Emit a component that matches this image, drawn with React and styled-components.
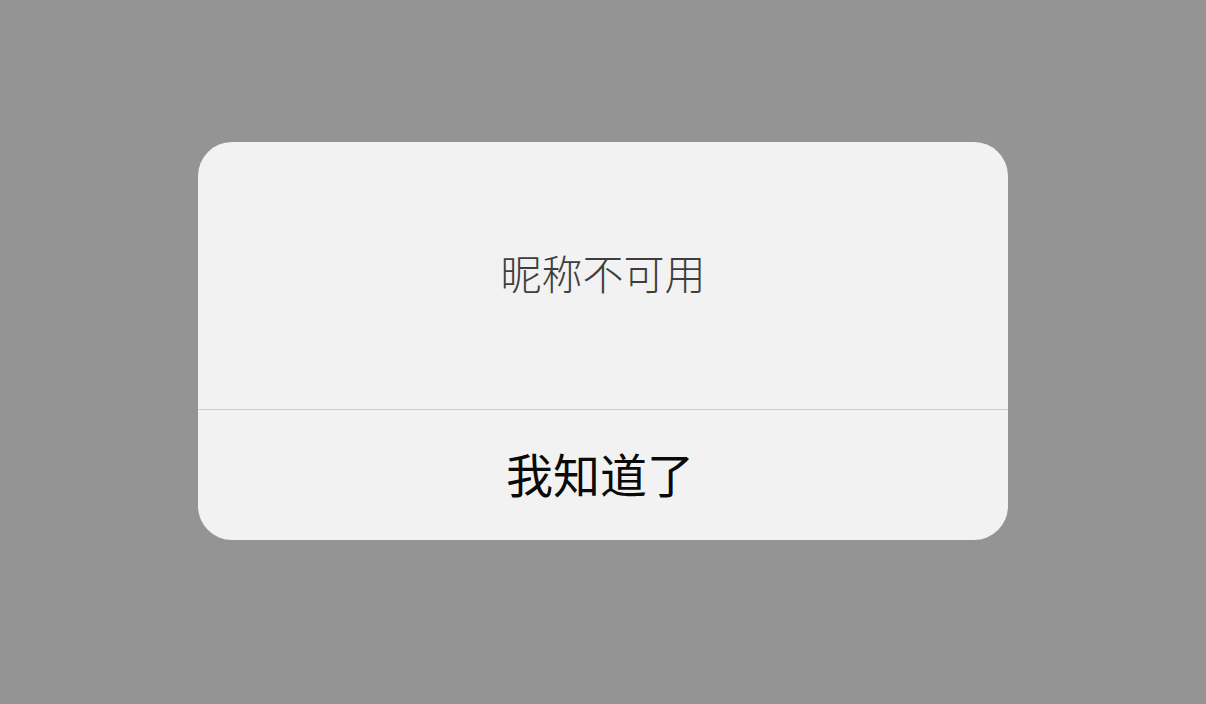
import React from "react";
import styled, { createGlobalStyle } from "styled-components";

const Global = createGlobalStyle`
  html, body { margin: 0; padding: 0; }
  body {
    background: #949494;
    font-family: "Noto Sans CJK SC", "Noto Sans", sans-serif;
  }
`;

const Page = styled.div`
  width: 1206px;
  height: 704px;
  display: flex;
  justify-content: center;
  padding-top: 142px;
  box-sizing: border-box;
`;

const Dialog = styled.div`
  width: 810px;
  height: 398px;
  background: #f2f2f2;
  border-radius: 34px;
  overflow: hidden;
  display: flex;
  flex-direction: column;
`;

const Body = styled.div`
  height: 268px;
  display: flex;
  align-items: center;
  justify-content: center;
  border-bottom: 1px solid #cfcfcf;
  box-sizing: border-box;
`;

const Title = styled.div`
  font-size: 41px;
  font-weight: 300;
  color: #3e3e3e;
  line-height: 1;
  margin-bottom: 6px;
`;

const Action = styled.button`
  flex: 1;
  border: none;
  background: transparent;
  font-family: inherit;
  font-size: 47px;
  font-weight: 400;
  color: #0a0a0a;
  line-height: 1;
  padding: 0 6px 6px 0;
  margin: 0;
  display: flex;
  align-items: center;
  justify-content: center;
`;

export default function App() {
  return (
    <>
      <Global />
      <Page>
        <Dialog>
          <Body>
            <Title>昵称不可用</Title>
          </Body>
          <Action>我知道了</Action>
        </Dialog>
      </Page>
    </>
  );
}
